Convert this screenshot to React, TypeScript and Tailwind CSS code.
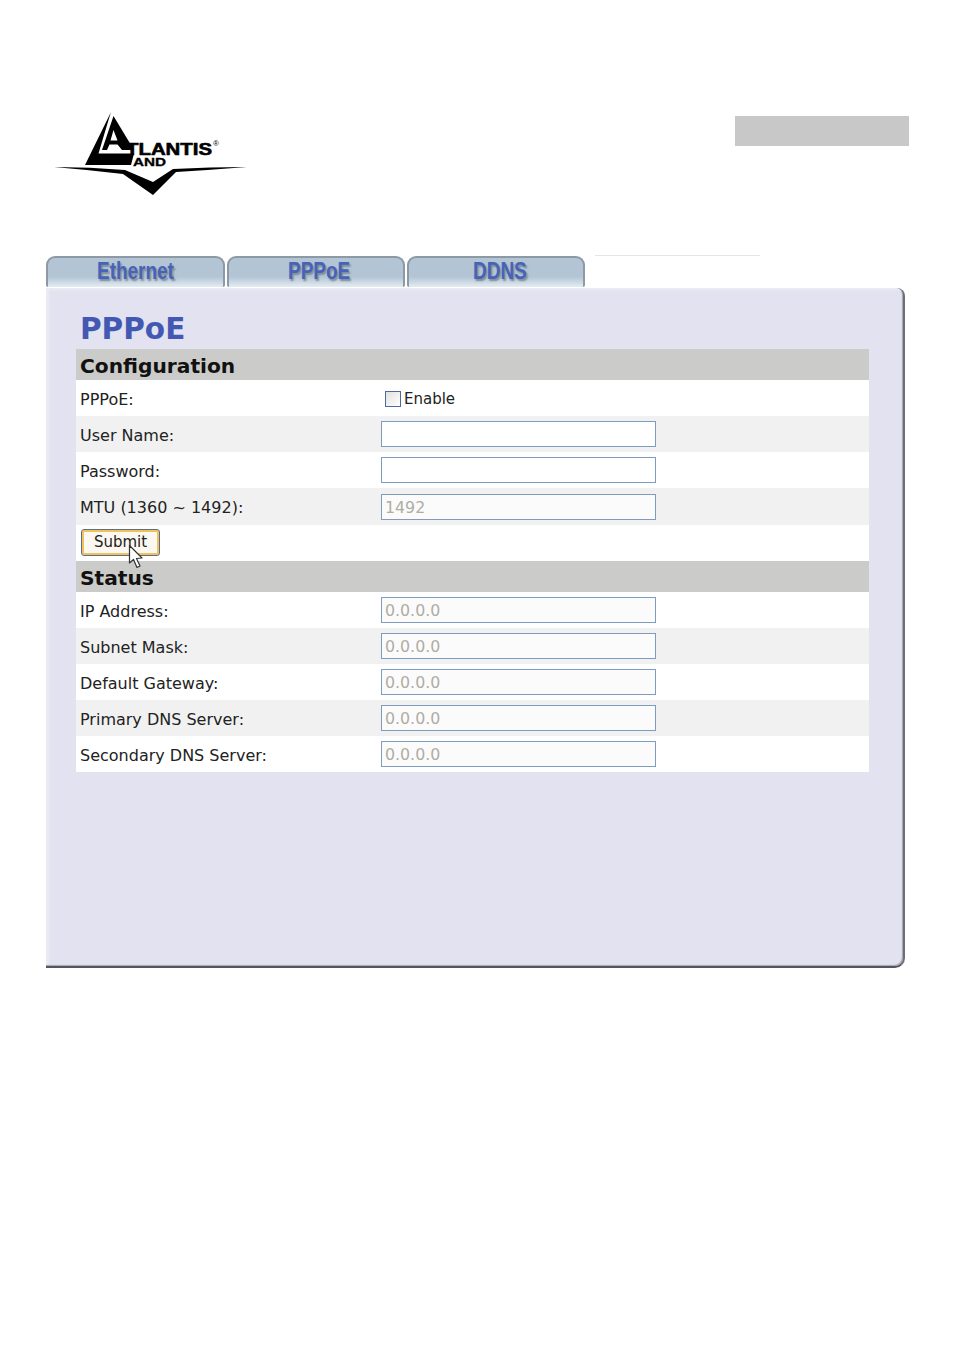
import React from "react";

const font = { fontFamily: '"DejaVu Sans", sans-serif' };

function Logo() {
  return (
    <svg width="198" height="88" viewBox="0 0 198 88" className="block">
      <g transform="translate(-52,-110)" fill="#000">
        <polygon points="111,112 85,165 131,165 134,153.5 98.5,153.5 108.5,120" />
        <polygon points="113.5,116 134,150 122,150 117.5,144.5 109.5,144.5 107,150 102,150" />
        <polygon points="113.5,130 110.5,140.5 117.5,140.5" fill="#fff" />
        <path d="M54 167 Q90 167 125 170 L153 182 L173 169 Q210 167 247 167 Q210 170 176 172 L153 195 L123 174 Q90 170 54 167 Z" />
        <text x="126" y="155" fontFamily="Liberation Sans, sans-serif" fontWeight="900" fontSize="17" stroke="#000" strokeWidth="0.6" textLength="86" lengthAdjust="spacingAndGlyphs">TLANTIS</text>
        <text x="133" y="165.5" fontFamily="Liberation Sans, sans-serif" fontWeight="700" fontSize="11.5" stroke="#000" strokeWidth="0.3" textLength="33" lengthAdjust="spacingAndGlyphs">AND</text>
        <text x="213" y="146" fontFamily="Liberation Sans, sans-serif" fontSize="8">®</text>
      </g>
    </svg>
  );
}

function Tab({ label, w, pl }: { label: string; w: string; pl: string }) {
  return (
    <div className={`${w} h-[31px] rounded-t-[9px] rounded-b-[2px] border-t-2 border-x-2 border-t-[#8d9aa5] border-x-[#8d9aa5] bg-gradient-to-b from-[#b3c5d5] from-65% to-[#e4ecf2] flex items-start ${pl}`}>
      <span
        className="mt-[1px] text-[24px] leading-[24px] font-bold text-[#4663b8] [text-shadow:2px_2px_2px_#7d8a96] scale-x-[0.79] origin-left whitespace-nowrap"
        style={{ fontFamily: '"Liberation Sans", sans-serif' }}
      >
        {label}
      </span>
    </div>
  );
}

function Header({ children }: { children: string }) {
  return (
    <div className="h-[31px] bg-[#cbcbc9] pl-1 pt-[3px] flex items-center text-[20.2px] font-bold text-[#111]">{children}</div>
  );
}

function Row({ label, value, shade, editable, tall }: { label: string; value?: string; shade?: boolean; editable?: boolean; tall?: boolean }) {
  return (
    <div className={`${tall ? "h-[37px]" : "h-9"} flex items-center pl-1 ${shade ? "bg-[#f1f1f1]" : "bg-white"}`}>
      <div className="w-[301px] pt-[3px] text-[16px] text-[#222]">{label}</div>
      <input
        readOnly
        value={value ?? ""}
        className={`w-[275px] h-[26px] border-[1.5px] border-[#7e9cc0] px-[3px] pt-px text-[15.8px] ${editable ? "bg-white" : "bg-[#fbfbfb]"} text-[#b0ada3] outline-none`}
        style={font}
      />
    </div>
  );
}

export default function App() {
  return (
    <div className="w-[954px] h-[1350px] bg-white overflow-hidden pt-[110px]" style={font}>
      <div className="flex justify-between items-start h-[88px] pl-[52px] pr-[45px]">
        <Logo />
        <div className="mt-[6px] w-[174px] h-[30px] bg-[#c8c8c8]" />
      </div>
      <div className="ml-[46px] mt-[58px] flex items-start gap-[2px]">
        <Tab label="Ethernet" w="w-[179px]" pl="pl-[49px]" />
        <Tab label="PPPoE" w="w-[178px]" pl="pl-[59px]" />
        <Tab label="DDNS" w="w-[178px]" pl="pl-[64px]" />
        <div className="ml-[8px] -mt-px w-[165px] h-px bg-[#e4e4e4]" />
      </div>
      <div className="ml-[46px] mt-px w-[859px] h-[680px] rounded-tr-[8px] rounded-br-[10px] bg-[#e2e2f0] border-r-[2px] border-b-[2px] border-r-[#6d6d78] border-b-[#55555f] shadow-[inset_-1px_-1px_1px_#a5a5b0,inset_3px_2px_3px_#ececf6] pl-[30px] pr-[34px] pt-[22px]">
        <div className="pl-1 pt-px h-[39px] text-[29.5px] leading-[36px] font-bold text-[#4358b3]">PPPoE</div>
        <Header>Configuration</Header>
        <div className="h-9 flex items-center pl-1 bg-white">
          <div className="w-[305px] pt-[3px] text-[16px] text-[#222]">PPPoE:</div>
          <span className="mt-[2px] w-4 h-4 border-[1.5px] border-[#4d6a9c] bg-gradient-to-br from-[#e0e0dc] to-white" />
          <span className="ml-[3px] pt-[3px] text-[15px] text-[#222]">Enable</span>
        </div>
        <Row label="User Name:" shade editable />
        <Row label="Password:" editable />
        <Row label="MTU (1360 ~ 1492):" value="1492" shade tall />
        <div className="relative h-9 flex items-center pl-[5px] bg-white">
          <button className="w-[79px] h-[27px] -mt-[1px] rounded-[3px] border-[1.5px] border-[#5a6f8f] bg-[#fbf8ef] shadow-[inset_0_0_0_2px_#f2c15c] text-[15px] text-[#222]">
            Submit
          </button>
          <svg width="17" height="26" viewBox="0 0 17 26" className="absolute left-[52px] top-[19px] z-10">
            <path d="M1.5 1.5 L1.5 19 L5.5 15.5 L9 23.5 L12 22 L8.5 14.5 L14 14 Z" fill="#fff" stroke="#333" strokeWidth="1.2" strokeLinejoin="round" />
          </svg>
        </div>
        <Header>Status</Header>
        <Row label="IP Address:" value="0.0.0.0" />
        <Row label="Subnet Mask:" value="0.0.0.0" shade />
        <Row label="Default Gateway:" value="0.0.0.0" />
        <Row label="Primary DNS Server:" value="0.0.0.0" shade />
        <Row label="Secondary DNS Server:" value="0.0.0.0" />
      </div>
    </div>
  );
}
